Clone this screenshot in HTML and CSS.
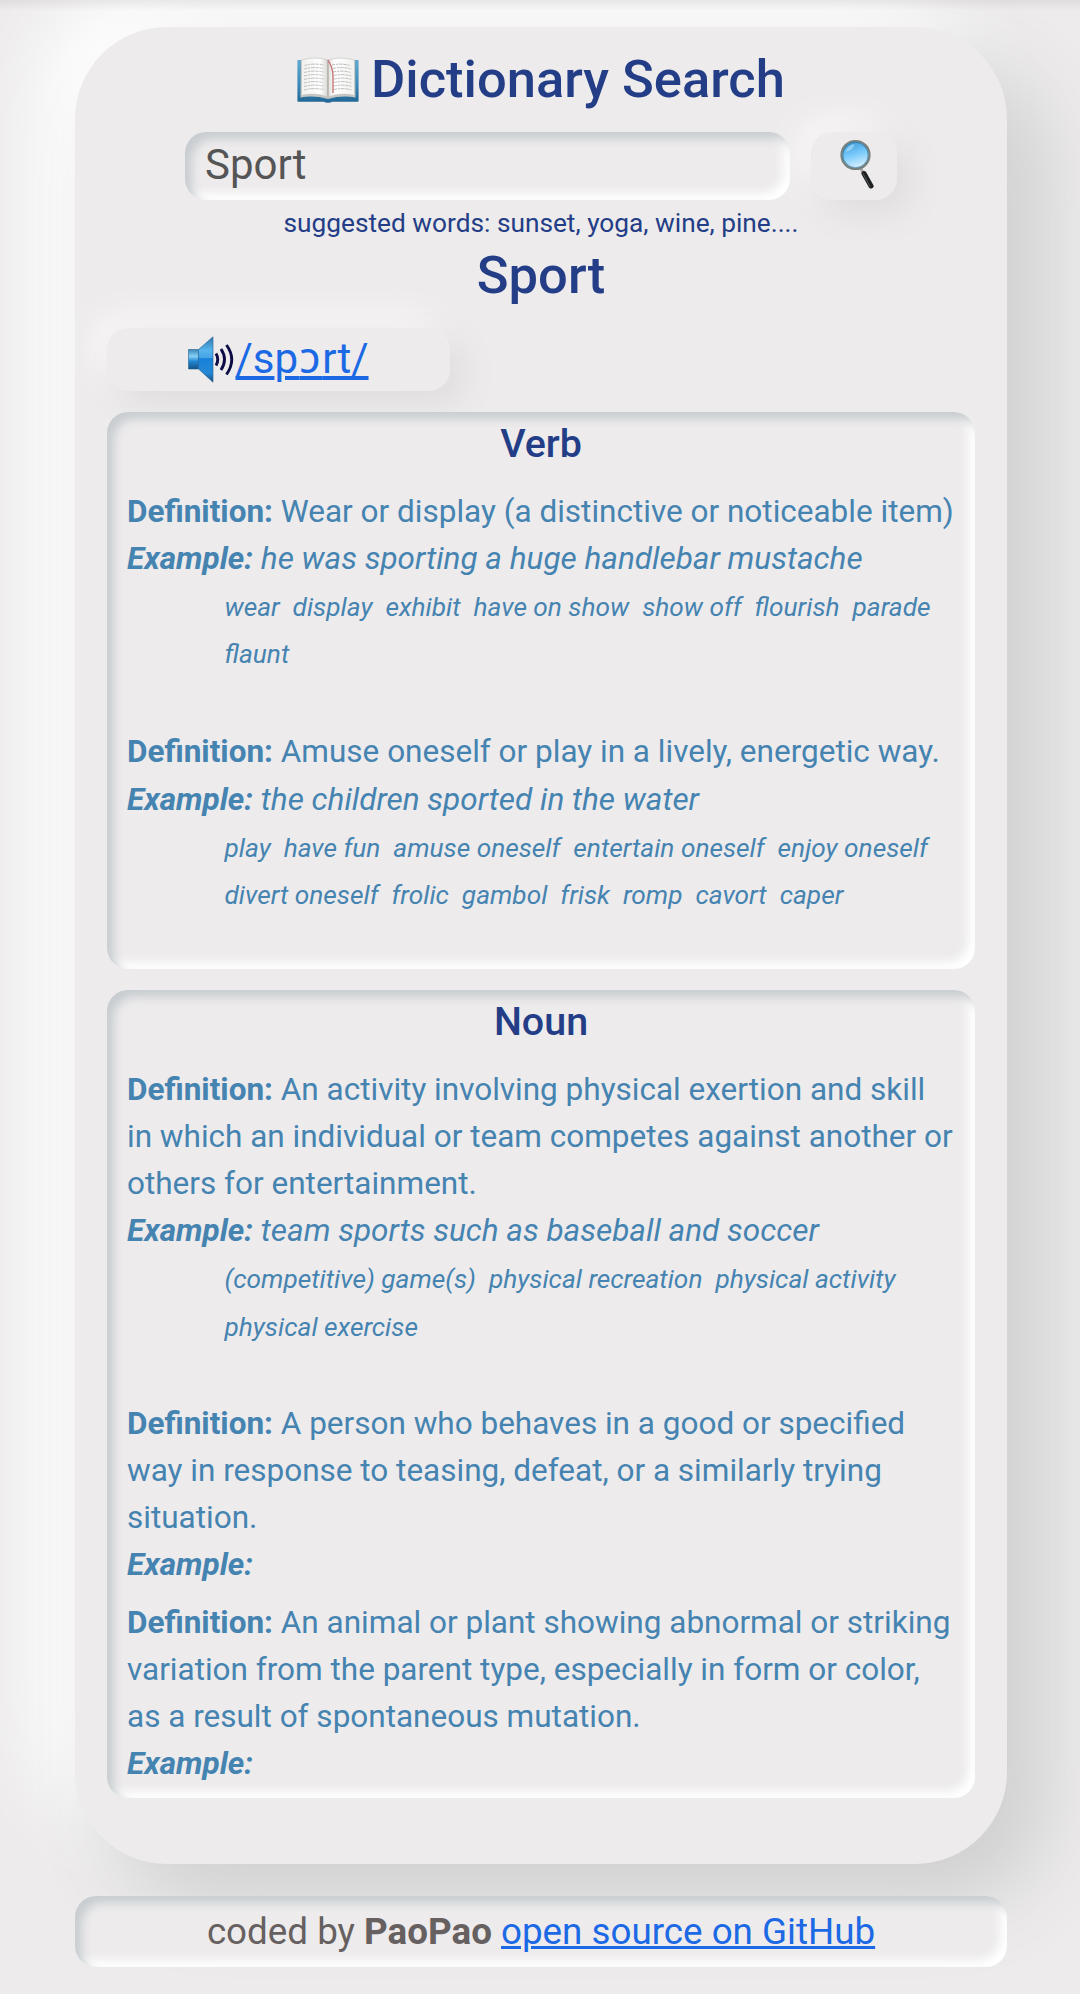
FILE: index.html
```
<!DOCTYPE html>
<html lang="en">
<head>
<meta charset="utf-8">
<title>Dictionary Search</title>
<link rel="stylesheet" href="styles.css">
</head>
<body>
<main class="card">
  <h1 class="title">
    <svg class="book" viewBox="0 0 62 46" aria-hidden="true">
      <defs>
        <linearGradient id="cover" x1="0" y1="0" x2="0" y2="1"><stop offset="0" stop-color="#63aacb"/><stop offset=".6" stop-color="#3a87b8"/><stop offset="1" stop-color="#216594"/></linearGradient>
        <linearGradient id="pageL" x1="0" x2="1"><stop offset="0" stop-color="#f0f0ee"/><stop offset=".7" stop-color="#fff"/><stop offset="1" stop-color="#d6d6d4"/></linearGradient>
        <linearGradient id="pageR" x1="0" x2="1"><stop offset="0" stop-color="#dededc"/><stop offset=".25" stop-color="#fff"/><stop offset="1" stop-color="#f1f1ef"/></linearGradient>
      </defs>
      <path d="M1 3h60q.6 0 .6 1v40q0 .8-.8.8H35q-1 1-4 1t-4-1H1.200q-.8 0-.8-.8V4q0-1 .6-1z" fill="url(#cover)"/>
      <path d="M4 4L3.500 40.500Q17 38 31 42q14-4 27.500-1.500L58 4z" fill="#c6c6c4"/>
      <path d="M4.500 3Q18-1 31 3v37Q18 35 4.500 38.500z" fill="url(#pageL)" stroke="#c3bfba" stroke-width=".6"/>
      <path d="M31 3q13-4 26.500 0v35.500Q44 35 31 40z" fill="url(#pageR)" stroke="#c3bfba" stroke-width=".6"/>
      <path d="M7.500 8.500q9-2.500 19-.5M7.200 12q9-2.500 19-.5M7.200 15.500q9-2.500 19.500-.5M7 19q9-2.500 19-.5M7 22.500q9-2.500 19.500-.5M7 26q9-2.500 19-.5M7 29.500q9-2.500 19.500-.5M7 33q9-2.500 19.500-.5M35 8q9-2 18.500.5M36 11.500q9-2 18.500.5M36 15q9-2 18 .5M37 18.500q9-2 17.500.5M37 22q9-2 18 .5M37 25.500q9-2 17.500.5M37 29q9-2 18 .5M37 32.500q9-2 18 .5" fill="none" stroke="#adadad" stroke-width=".8" stroke-dasharray="3.200 .8 2 .7 4 .8"/>
      <path d="M31 3v37" stroke="#a9a19d" stroke-width="1"/>
      <path d="M31 3q5 8 5 16v17" fill="none" stroke="#c46e70" stroke-width="1.300"/>
    </svg>
    <span>Dictionary Search</span>
  </h1>
  <form class="search">
    <input class="field inset" type="text" value="Sport" aria-label="Word">
    <button class="go raised" type="button" aria-label="Search">
      <svg class="lens" viewBox="0 0 34 50" aria-hidden="true">
        <defs>
          <linearGradient id="glass" x1=".3" y1="0" x2=".6" y2="1"><stop offset="0" stop-color="#3999d8"/><stop offset=".5" stop-color="#7bccfb"/><stop offset="1" stop-color="#e4f2ff"/></linearGradient>
        </defs>
        <path d="M20.500 29l4 7" stroke="#a9aaa9" stroke-width="3"/>
        <path d="M24 34.500l7 12.500" stroke="#1d1f20" stroke-width="5" stroke-linecap="round"/>
        <path d="M23 34.500l7 13" stroke="#565a5b" stroke-width="1"/>
        <circle cx="15.500" cy="16" r="14" fill="url(#glass)" stroke="#76807f" stroke-width="2.200"/>
        <circle cx="15.500" cy="16" r="12.600" fill="none" stroke="#1d668f" stroke-width=".8" opacity=".7"/>
        <path d="M5.500 13q2-7 9-8-1 6-9 8z" fill="#b8e4fc" opacity=".6"/>
      </svg>
    </button>
  </form>
  <p class="hint">suggested words: sunset, yoga, wine, pine....</p>
  <h2 class="word">Sport</h2>
  <div class="phonetic raised">
    <svg class="speaker" viewBox="0 0 47 47" aria-hidden="true">
      <defs>
        <linearGradient id="cone" x1="0" y1="0" x2="0" y2="1"><stop offset="0" stop-color="#2f78ae"/><stop offset=".3" stop-color="#58b4ed"/><stop offset=".47" stop-color="#45a2e5"/><stop offset=".48" stop-color="#1782da"/><stop offset=".8" stop-color="#2587d5"/><stop offset="1" stop-color="#164d82"/></linearGradient>
        <linearGradient id="magnet" x1="0" y1="0" x2="0" y2="1"><stop offset="0" stop-color="#3a85b5"/><stop offset=".35" stop-color="#86d1f6"/><stop offset=".6" stop-color="#2187d2"/><stop offset="1" stop-color="#155388"/></linearGradient>
      </defs>
      <path d="M.5 13.500h10v19.500H.5z" fill="url(#magnet)" stroke="#24618e" stroke-width=".6"/>
      <path d="M10.500 13.500L25 .8v45.400L10.500 33z" fill="url(#cone)" stroke="#24618e" stroke-width=".6"/>
      <path d="M28 17.500q3.500 6 0 12M33 13q7 10.500 0 21M38.500 9q10.500 14.500 0 29.500" fill="none" stroke="#0c0b45" stroke-width="2.900"/>
    </svg>
    <a class="ipa" href="#">/s<span class="wide">p</span><span class="open-o">ɔ</span>rt/</a>
  </div>

  <section class="meaning verb inset">
    <h3>Verb</h3>
    <div class="entry">
      <p><b>Definition:</b> Wear or display (a distinctive or noticeable item)</p>
      <p class="example"><b>Example:</b> he was sporting a huge handlebar mustache</p>
      <ul class="synonyms"><li>wear</li> <li>display</li> <li>exhibit</li> <li>have on show</li> <li>show off</li> <li>flourish</li> <li>parade</li> <li>flaunt</li></ul>
    </div>
    <div class="entry">
      <p><b>Definition:</b> Amuse oneself or play in a lively, energetic way.</p>
      <p class="example"><b>Example:</b> the children sported in the water</p>
      <ul class="synonyms"><li>play</li> <li>have fun</li> <li>amuse oneself</li> <li>entertain oneself</li> <li>enjoy oneself</li> <li>divert oneself</li> <li>frolic</li> <li>gambol</li> <li>frisk</li> <li>romp</li> <li>cavort</li> <li>caper</li></ul>
    </div>
  </section>

  <section class="meaning noun inset">
    <h3>Noun</h3>
    <div class="entry">
      <p><b>Definition:</b> An activity involving physical exertion and skill in which an individual or team competes against another or others for entertainment.</p>
      <p class="example"><b>Example:</b> team sports such as baseball and soccer</p>
      <ul class="synonyms"><li>(competitive) game(s)</li> <li>physical recreation</li> <li>physical activity</li> <li>physical exercise</li></ul>
    </div>
    <div class="entry">
      <p><b>Definition:</b> A person who behaves in a good or specified way in response to teasing, defeat, or a similarly trying situation.</p>
      <p class="example"><b>Example:</b></p>
    </div>
    <div class="entry">
      <p><b>Definition:</b> An animal or plant showing abnormal or striking variation from the parent type, especially in form or color, as a result of spontaneous mutation.</p>
      <p class="example"><b>Example:</b></p>
    </div>
  </section>
</main>
<footer class="credits inset">coded by <b>PaoPao</b> <a href="#">open source on GitHub</a></footer>
</body>
</html>
```
FILE: styles.css
```
* { box-sizing: border-box; }
html { overflow: hidden; }
body {
  position: relative;
  margin: 0;
  padding: 27px 73px 27px 75px;
  min-height: 1994px;
  background: #edebec;
  font-family: Roboto, "Noto Sans", sans-serif;
  color: #233d86;
}
/* soft shade cast by the browser bar over the page */
body::before {
  content: "";
  position: absolute;
  inset: 0 0 auto;
  height: 11px;
  z-index: 1;
  background: linear-gradient(rgba(60, 50, 50, .08), transparent);
}
h1, h2, h3, p, ul { margin: 0; padding: 0; }
a { color: #1b69e4; text-decoration: underline; }

.inset {
  border-radius: 21px;
  background: #edebec;
  box-shadow: inset 7px 7px 10px #c8cdd1, inset -7px -7px 10px #fff;
}
.raised {
  border-radius: 21px;
  background: #edebec;
  box-shadow: 13px 13px 32px #dfdddd, -13px -13px 32px #f9f7f7;
}

.card {
  height: 1837px;
  padding: 21px 32px 0;
  border-radius: 92px;
  background: #edebec;
  box-shadow: 39px 39px 79px #d0d0d0, -39px -39px 79px #fff;
}
.title {
  display: flex;
  justify-content: center;
  align-items: center;
  gap: 12px;
  font-size: 52.5px;
  font-weight: 500;
  line-height: 63px;
}
.book { width: 62px; height: 46px; }

.search {
  display: flex;
  justify-content: center;
  gap: 21px;
  margin-top: 21px;
}
.field {
  width: 605px;
  height: 68px;
  padding: 0 20px 4px;
  border: 0;
  outline: 0;
  font: 400 42px/63px Roboto, sans-serif;
  color: #555;
}
.go {
  display: flex;
  justify-content: center;
  align-items: center;
  width: 86px;
  height: 68px;
  padding: 0 0 4px 6px;
  border: 0;
}
.lens { width: 34px; height: 50px; }
.hint {
  margin-top: 4px;
  font-size: 26.25px;
  line-height: 39.4px;
  text-align: center;
}
.word {
  margin-top: 1px;
  font-size: 52.5px;
  font-weight: 500;
  line-height: 63px;
  text-align: center;
}
.phonetic {
  display: flex;
  justify-content: center;
  align-items: center;
  width: 343px;
  height: 63px;
  margin-top: 20.5px;
  font-size: 42px;
  line-height: 61px;
}
.speaker { width: 47px; height: 47px; }
.ipa { height: 63px; }
.wide { letter-spacing: 1.5px; }
.open-o { font-family: "Noto Sans", sans-serif; font-size: 44px; line-height: 1; letter-spacing: 1.5px; }

.meaning {
  margin-top: 21px;
  padding: 8.5px 20px 0;
  font-size: 31.5px;
  line-height: 47.1px;
  color: #4583b1;
}
.meaning h3 {
  margin-bottom: 20.5px;
  font-size: 39.4px;
  font-weight: 500;
  text-align: center;
  color: #233d86;
}
.entry { padding-bottom: 10.5px; }
.example { font-style: italic; }
.synonyms {
  margin: 0 0 41px 84px;
  padding-left: 13.5px;
  list-style: none;
  font-style: italic;
  word-spacing: -1px;
}
.verb .synonyms { margin-bottom: 41.6px; }
.synonyms li { display: inline; margin-right: 6.2px; font-size: 26.25px; line-height: 1; word-spacing: 0; }

.credits {
  height: 71px;
  margin-top: 32px;
  padding-top: 8px;
  font-size: 36.75px;
  line-height: 55px;
  text-align: center;
  color: #666060;
}
```
